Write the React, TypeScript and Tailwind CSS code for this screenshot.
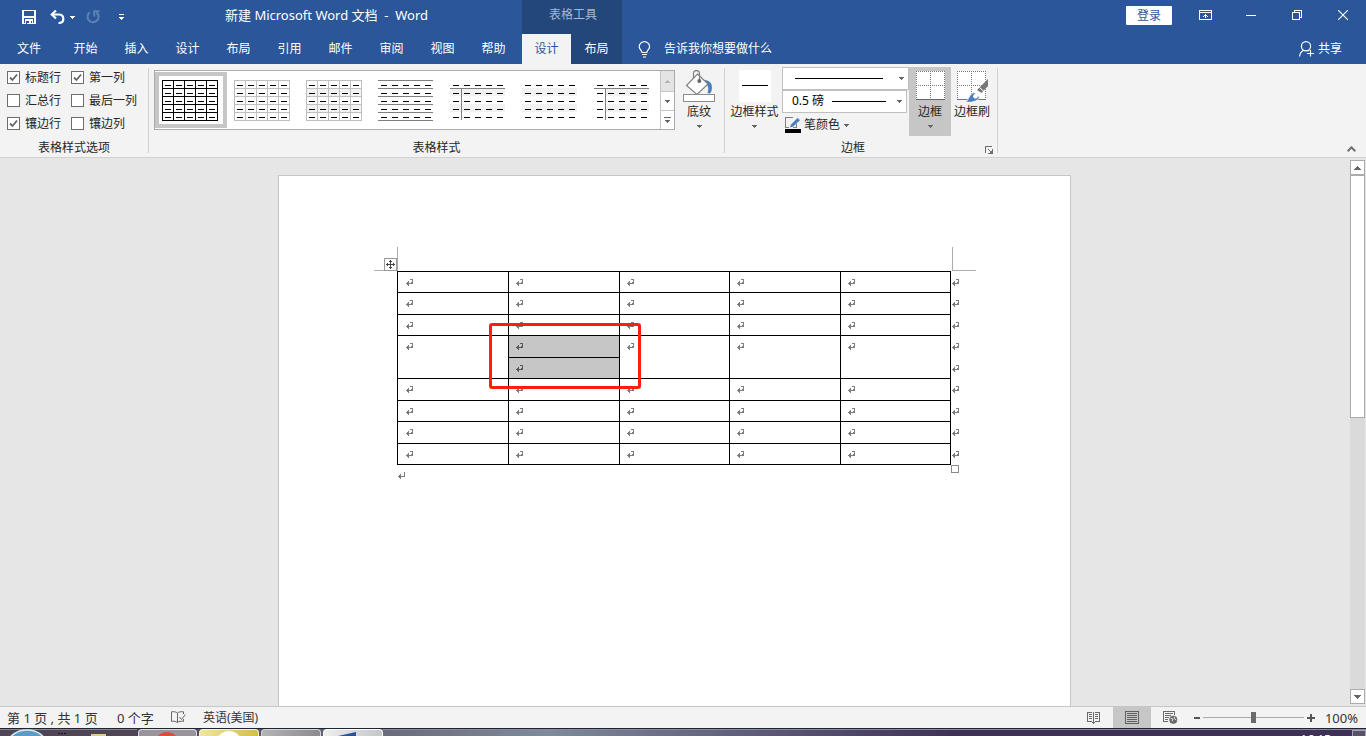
import { Fragment } from 'react';
import type { ReactNode } from 'react';

const MENU_TABS = ['开始', '插入', '设计', '布局', '引用', '邮件', '审阅', '视图', '帮助'];

const STYLE_OPTIONS = [
  { label: '标题行', checked: true },
  { label: '第一列', checked: true },
  { label: '汇总行', checked: false },
  { label: '最后一列', checked: false },
  { label: '镶边行', checked: true },
  { label: '镶边列', checked: false },
];

type ThumbStyle = {
  name: string;
  grid?: string;
  rules?: string;
  header?: boolean;
  bands?: 'all' | 'body';
};

const TABLE_STYLES: ThumbStyle[] = [
  { name: '网格型', grid: '#000000' },
  { name: '网格型浅色', grid: '#bfbfbf' },
  { name: '无格式表格 1', grid: '#bfbfbf', bands: 'all' },
  { name: '无格式表格 2', rules: '#7f7f7f' },
  { name: '无格式表格 3', header: true, bands: 'all' },
  { name: '无格式表格 4', bands: 'all' },
  { name: '无格式表格 5', header: true, bands: 'body' },
];

const FIVE = [0, 1, 2, 3, 4];
const SIX = [0, 1, 2, 3, 4, 5];

function StyleThumb({ style }: { style: ThumbStyle }) {
  const bandX = style.bands === 'body' ? 12 : 0;
  return (
    <svg width="56" height="41" viewBox="0 0 56 41" shapeRendering="crispEdges" aria-hidden="true">
      {style.bands && (
        <g fill="#f2f2f2">
          <rect x={bandX} y="8" width={55 - bandX} height="8" />
          <rect x={bandX} y="24" width={55 - bandX} height="8" />
        </g>
      )}
      {style.grid &&
        SIX.map((i) => (
          <Fragment key={i}>
            <rect x={i * 11} y="0" width="1" height="41" fill={style.grid} />
            <rect x="0" y={i * 8} width="56" height="1" fill={style.grid} />
          </Fragment>
        ))}
      {style.rules &&
        SIX.map((i) => <rect key={i} x="0" y={i * 8} width="55" height="1" fill={style.rules} />)}
      {style.header && (
        <g fill="#7f7f7f">
          <rect x="0" y="8" width="55" height="1" />
          <rect x="11" y="8" width="1" height="32" />
        </g>
      )}
      {FIVE.map((r) =>
        FIVE.map((c) => (
          <rect key={`${r}-${c}`} x={c * 11 + 3} y={r * 8 + 5} width="6" height="1" fill="#000" />
        )),
      )}
    </svg>
  );
}

function Caret({ color = '#666666', up = false }: { color?: string; up?: boolean }) {
  return (
    <svg width="5" height="3" viewBox="0 0 5 3" shapeRendering="crispEdges" aria-hidden="true" className="shrink-0">
      <path d={up ? 'M0 3h5v-1h-1v-1h-1v-1h-1v1h-1v1h-1z' : 'M0 0h5v1h-1v1h-1v1h-1v-1h-1v-1h-1z'} fill={color} />
    </svg>
  );
}

function ReturnMark({ dark = false }: { dark?: boolean }) {
  return (
    <svg width="8" height="8" viewBox="0 0 8 8" shapeRendering="crispEdges" aria-hidden="true" className="block">
      <path
        d="M4 0h3v5h-4v2h-1v-1h-1v-1h-1v-1h1v-1h1v-1h1v2h2v-1h1v-2h-2z"
        fill={dark ? '#5a5a5a' : '#7d7d7d'}
      />
    </svg>
  );
}

function ParagraphMark() {
  return (
    <svg width="8" height="8" viewBox="0 0 8 8" shapeRendering="crispEdges" aria-hidden="true" className="block">
      <path d="M6 0h1v5h-4v2h-1v-1h-1v-1h-1v-1h1v-1h1v-1h1v2h3z" fill="#7d7d7d" />
    </svg>
  );
}

function Separator() {
  return <div className="my-1 w-px shrink-0 bg-[#d2d2d2]" />;
}

function BigButton({
  icon,
  label,
  caret = false,
  active = false,
  wide = false,
}: {
  icon: ReactNode;
  label: string;
  caret?: boolean;
  active?: boolean;
  wide?: boolean;
}) {
  return (
    <button
      type="button"
      className={`mt-[3px] flex h-[69px] shrink-0 flex-col items-center pt-[3px] ${wide ? 'w-[51px]' : 'w-[42px]'} ${active ? 'bg-[#c6c6c6]' : ''}`}
    >
      <span className="flex h-[34px] items-start justify-center">{icon}</span>
      <span className="h-4 leading-4 whitespace-nowrap">{label}</span>
      {caret && (
        <span className="mt-[5px]">
          <Caret />
        </span>
      )}
    </button>
  );
}

function TitleBar() {
  return (
    <header className="flex h-16 shrink-0 bg-[#2b579a] text-white">
      <div className="flex w-[522px] shrink-0 flex-col">
        <div className="flex h-[34px] items-center">
          <button type="button" aria-label="保存" className="ml-[22px]">
            <svg width="14" height="14" viewBox="0 0 14 14" shapeRendering="crispEdges">
              <path
                fill="#fff"
                fillRule="evenodd"
                d="M0 0h14v14h-14zM2 1v5h10v-5zM2 8v5h1v-4h8v4h1v-5zM4 11v3h1v-3zM6 11v2h2v-2z"
              />
              <path fill="#2b579a" d="M4 10h6v3h-6z" />
              <path fill="#fff" d="M4 10h6v1h-6zM7 11h2v2h-2z" />
            </svg>
          </button>
          <button type="button" aria-label="撤消" className="ml-[14px] flex items-center gap-[5px]">
            <svg width="15" height="14" viewBox="0 0 15 14" fill="none" stroke="#fff" strokeWidth="2.2">
              <path d="M6 0.5L1.8 4.5L6 8.5" />
              <path d="M2 4.5H8.5C11.8 4.5 13.3 6.3 13.3 8.7C13.3 11.3 11.5 13 8.5 13" />
            </svg>
            <Caret color="#ffffff" />
          </button>
          <button type="button" aria-label="重复" className="ml-[11px]">
            <svg width="14" height="14" viewBox="0 0 14 14" fill="none" stroke="#5f80b4" strokeWidth="2">
              <path d="M3.8 2.3A5.5 5.5 0 1 0 10.4 2.4" />
              <path d="M8.2 6.5V1.2H13.5" />
            </svg>
          </button>
          <button type="button" aria-label="自定义快速访问工具栏" className="ml-[19px]">
            <svg width="5" height="6" viewBox="0 0 5 6" shapeRendering="crispEdges">
              <path d="M0 0h5v1h-5zM0 3h5v1h-1v1h-1v1h-1v-1h-1v-1h-1z" fill="#fff" />
            </svg>
          </button>
          <h1 className="ml-[101px] pb-1 text-[13px] leading-5 whitespace-pre">新建 Microsoft Word 文档  -  Word</h1>
        </div>
        <nav className="flex h-[30px]">
          <button type="button" className="w-[60px] pr-[2px]">文件</button>
          {MENU_TABS.map((tab) => (
            <button key={tab} type="button" className="w-[51px]">
              {tab}
            </button>
          ))}
        </nav>
      </div>
      <div className="flex w-[100px] shrink-0 flex-col bg-[#24477a]">
        <div className="h-[34px] pt-[5px] pl-[27px] leading-5 text-[#a3b8d6]">表格工具</div>
        <div className="flex h-[30px]">
          <button type="button" className="w-[49px] bg-[#f3f3f3] text-[#2b579a]">设计</button>
          <button type="button" className="w-[51px]">布局</button>
        </div>
      </div>
      <div className="flex min-w-0 flex-1 flex-col">
        <div className="flex h-[34px] justify-end">
          <button type="button" className="mt-[6px] mr-[10px] h-[19px] w-[46px] rounded-[1px] bg-white leading-[19px] text-[#2b579a]">
            登录
          </button>
          <button type="button" aria-label="功能区显示选项" className="flex h-[30px] w-[46px] items-center justify-center">
            <svg width="13" height="10" viewBox="0 0 13 10" fill="none" stroke="#fff" shapeRendering="crispEdges">
              <path d="M0.5 0.5h12v9h-12zM0 2.5h13M6.5 4v4M4 6.5h1M8 6.5h1M5 5.5h3" />
            </svg>
          </button>
          <button type="button" aria-label="最小化" className="flex h-[30px] w-[46px] items-center justify-center">
            <svg width="10" height="1" viewBox="0 0 10 1" shapeRendering="crispEdges">
              <path d="M0 0h10v1h-10z" fill="#fff" />
            </svg>
          </button>
          <button type="button" aria-label="向下还原" className="flex h-[30px] w-[46px] items-center justify-center">
            <svg width="10" height="10" viewBox="0 0 10 10" fill="none" stroke="#fff" shapeRendering="crispEdges">
              <path d="M0.5 2.5h7v7h-7zM2.5 2.5v-2h7v7h-2" />
            </svg>
          </button>
          <button type="button" aria-label="关闭" className="flex h-[30px] w-[46px] items-center justify-center">
            <svg width="10" height="10" viewBox="0 0 10 10" fill="none" stroke="#fff" strokeWidth="1.1">
              <path d="M0 0L10 10M10 0L0 10" />
            </svg>
          </button>
        </div>
        <div className="flex h-[30px] items-center justify-between pr-6 pl-4">
          <button type="button" className="flex items-center gap-[13px]">
            <svg width="13" height="17" viewBox="0 0 13 17" fill="none" stroke="#fff" strokeWidth="1.2">
              <path d="M4 11.5C4 9.5 1.2 8.5 1.2 5.6A5.2 5 0 0 1 11.6 5.6C11.6 8.5 8.8 9.5 8.8 11.5Z" />
              <path d="M4 13.5H9M5 16H8" />
            </svg>
            告诉我你想要做什么
          </button>
          <button type="button" className="flex items-center gap-1">
            <svg width="15" height="16" viewBox="0 0 15 16" fill="none" stroke="#fff" strokeWidth="1.2">
              <circle cx="7" cy="5.2" r="4.6" />
              <path d="M0.6 15.5C0.8 12.5 2.4 10.6 4.6 9.3M9.4 9.2L10.2 9.8" />
              <path d="M11.5 9V15.5M8 12.5H15" />
            </svg>
            共享
          </button>
        </div>
      </div>
    </header>
  );
}

function GroupLabel({ children }: { children: ReactNode }) {
  return <div className="mb-px flex h-4 items-center justify-center leading-4">{children}</div>;
}

function Ribbon() {
  return (
    <section className="flex h-[94px] shrink-0 border-b border-[#d2d2d2] bg-[#f3f3f3] text-[#262626]">
      <div className="flex w-[148px] shrink-0 flex-col justify-between">
        <div className="grid grid-cols-[64px_1fr] pt-[2px] pl-[7px]">
          {STYLE_OPTIONS.map((option) => (
            <label key={option.label} className="flex h-[23px] items-center gap-[5px] whitespace-nowrap">
              <span className="relative flex">
                <input
                  type="checkbox"
                  defaultChecked={option.checked}
                  className="peer size-[13px] appearance-none border border-[#6d6d6d] bg-white"
                />
                <svg
                  width="13"
                  height="13"
                  viewBox="0 0 13 13"
                  fill="none"
                  stroke="#666"
                  strokeWidth="1.8"
                  className="pointer-events-none absolute inset-0 hidden peer-checked:block"
                >
                  <path d="M3 6.5L5.5 9L10 3.5" />
                </svg>
              </span>
              {option.label}
            </label>
          ))}
        </div>
        <GroupLabel>表格样式选项</GroupLabel>
      </div>
      <Separator />
      <div className="flex w-[575px] shrink-0 flex-col justify-between">
        <div className="flex pl-[5px]">
          <div className="mt-[6px] flex h-[60px] border border-[#ababab] bg-white">
            <div className="flex w-[505px] pt-px">
              {TABLE_STYLES.map((style, i) => (
                <button
                  key={style.name}
                  type="button"
                  aria-label={style.name}
                  className={`h-14 w-[72px] border-4 p-[3px] ${i === 0 ? 'border-[#c6c6c6]' : 'border-transparent'}`}
                >
                  <StyleThumb style={style} />
                </button>
              ))}
            </div>
            <div className="flex w-[14px] flex-col border-l border-[#c6c6c6]">
              <button type="button" aria-label="上一行" className="flex h-5 items-center justify-center bg-[#e4e4e4]">
                <Caret up color="#b5b5b5" />
              </button>
              <button type="button" aria-label="下一行" className="flex h-[19px] items-center justify-center border-t border-[#c6c6c6]">
                <Caret />
              </button>
              <button type="button" aria-label="其他" className="flex h-[19px] items-center justify-center border-t border-[#c6c6c6]">
                <svg width="7" height="6" viewBox="0 0 7 6" shapeRendering="crispEdges">
                  <path d="M0 0h7v1h-7zM1 3h5v1h-1v1h-1v1h-1v-1h-1v-1h-1z" fill="#666" />
                </svg>
              </button>
            </div>
          </div>
          <div className="ml-[3px] flex">
            <BigButton
              label="底纹"
              caret
              icon={
                <svg width="32" height="32" viewBox="0 0 32 32" fill="none">
                  <path d="M21 10C28 10 30 15 28.5 21C28 23.5 25.5 24.5 24.5 22.5C26 19 25.5 15.5 22.5 13Z" fill="#4a7ebb" />
                  <path d="M14.5 4L25 14L14 24.5L3.5 15.5Z" fill="#fff" stroke="#808080" strokeWidth="1.2" />
                  <path d="M10.5 8.5V3C10.5 -0.3 16.5 -0.3 16.5 3V10" stroke="#808080" strokeWidth="1.2" />
                  <circle cx="16.3" cy="11" r="2" fill="#666" />
                  <path d="M0.5 24.5H31.5V31.5H0.5Z" fill="#fff" stroke="#8c8c8c" shapeRendering="crispEdges" />
                </svg>
              }
            />
          </div>
        </div>
        <GroupLabel>表格样式</GroupLabel>
      </div>
      <Separator />
      <div className="flex w-[272px] shrink-0 flex-col justify-between">
        <div className="flex pl-1">
          <BigButton
            wide
            label="边框样式"
            caret
            icon={
              <svg width="32" height="32" viewBox="0 0 32 32" shapeRendering="crispEdges">
                <path d="M0 0h32v32h-32z" fill="#fff" />
                <path d="M3 15h26v1h-26z" fill="#000" />
              </svg>
            }
          />
          <div className="mt-[3px] ml-[2px] flex w-[127px] flex-col items-start">
            <div className="relative flex h-[23px] w-full items-center border border-[#c0c0c0] bg-white">
              <select aria-label="笔样式" defaultValue="single" className="absolute inset-0 w-full appearance-none bg-transparent">
                <option value="single" aria-label="单实线" />
              </select>
              <span className="pointer-events-none ml-3 h-px w-[88px] bg-black" />
              <span className="pointer-events-none ml-4 flex">
                <Caret />
              </span>
            </div>
            <div className="relative flex h-[23px] w-[125px] items-center border border-[#c0c0c0] bg-white">
              <select
                aria-label="笔划粗细"
                defaultValue="0.5 磅"
                className="absolute inset-0 w-full appearance-none bg-transparent pb-px pl-[9px] leading-5 text-black"
              >
                <option value="0.5 磅">0.5 磅</option>
              </select>
              <span className="pointer-events-none ml-[49px] h-px w-[54px] bg-black" />
              <span className="pointer-events-none ml-[11px] flex">
                <Caret />
              </span>
            </div>
            <button type="button" className="mt-1 ml-[3px] flex h-4 items-center">
              <svg width="16" height="16" viewBox="0 0 16 16" fill="none">
                <path d="M8 0.5H0.5V10.5H4M11.5 7V10.5H8" stroke="#808080" shapeRendering="crispEdges" />
                <path d="M5 10.5L6 7.5L12.5 1L15 3.2L8.3 9.6Z" fill="#4a7ebb" />
                <path d="M0 12h16v4h-16z" fill="#000" />
              </svg>
              <span className="mr-1 ml-[3px] leading-4">笔颜色</span>
              <Caret />
            </button>
          </div>
          <BigButton
            active
            label="边框"
            caret
            icon={
              <svg width="29" height="30" viewBox="0 0 29 30" shapeRendering="crispEdges" fill="none">
                <path d="M0 1h29v29h-29z" fill="#fff" />
                <path d="M0 1.5H29M0 15.5H29M0.5 1V28M14.5 1V28M28.5 1V28" stroke="#7a7a7a" strokeDasharray="1 1" />
                <path d="M0 29h29v1h-29z" fill="#666" />
              </svg>
            }
          />
          <BigButton
            label="边框刷"
            icon={
              <svg width="32" height="32" viewBox="0 0 32 32" fill="none">
                <path d="M1 1h29v29h-29z" fill="#fff" />
                <path
                  d="M1 1.5H30M1 15.5H30M1.5 1V28M15.5 1V28M29.5 1V28"
                  stroke="#7a7a7a"
                  strokeDasharray="1 1"
                  shapeRendering="crispEdges"
                />
                <path d="M1 29h29v1h-29z" fill="#4a7ebb" shapeRendering="crispEdges" />
                <path d="M9.5 32C13 30 13 24 18 22.5L23.5 27C22 31.5 15 33 9.5 32Z" fill="#4a7ebb" stroke="#fff" strokeWidth="0.8" />
                <circle cx="19.5" cy="26.3" r="2.4" fill="#fff" />
                <path d="M21 20L32 9V16L25.5 23Z" fill="#777" />
                <path d="M23.5 17.5L28 21.5" stroke="#fff" />
              </svg>
            }
          />
        </div>
        <div className="mb-px flex h-4 items-center leading-4">
          <span className="flex-1 text-center">边框</span>
          <button type="button" aria-label="边框对话框启动器" className="mr-1 pl-1">
            <svg width="8" height="8" viewBox="0 0 8 8" fill="none" stroke="#6d6d6d" shapeRendering="crispEdges" className="mt-1">
              <path d="M0.5 7V0.5H7M3 3.5H4M4 4.5H5M7.5 3V8M3 7.5H8M5 5.5H7M5 6.5H7" />
            </svg>
          </button>
        </div>
      </div>
      <Separator />
      <div className="flex flex-1 items-end justify-end pr-[10px] pb-[5px]">
        <button type="button" aria-label="折叠功能区">
          <svg width="9" height="6" viewBox="0 0 9 6" fill="none" stroke="#6d6d6d" strokeWidth="2">
            <path d="M0.7 5.2L4.5 1.4L8.3 5.2" />
          </svg>
        </button>
      </div>
    </section>
  );
}

const ROWS = [
  { split: 0, tall: false },
  { split: 0, tall: true },
  { split: 0, tall: false },
  { split: 1, tall: true },
  { split: 2, tall: false },
  { split: 0, tall: true },
  { split: 0, tall: false },
  { split: 0, tall: true },
  { split: 0, tall: false },
];

function DocumentTable() {
  return (
    <table className="w-[564px] table-fixed border-collapse">
      <colgroup>
        <col className="w-[111px]" />
        <col className="w-[111px]" />
        <col className="w-[110px]" />
        <col className="w-[111px]" />
        <col className="w-[110px]" />
        <col className="w-[10px]" />
      </colgroup>
      <tbody>
        {ROWS.map((row, r) => (
          <tr key={r} className={row.tall ? 'h-[22px]' : 'h-[21px]'}>
            {FIVE.map((c) => {
              if (row.split === 2 && c !== 1) return null;
              const selected = row.split > 0 && c === 1;
              return (
                <td
                  key={c}
                  rowSpan={row.split === 1 && c !== 1 ? 2 : 1}
                  className={`border border-black pt-[7px] align-top ${c === 0 ? 'pl-2' : 'pl-[7px]'} ${selected ? 'bg-[#c6c6c6]' : ''}`}
                >
                  <ReturnMark dark={selected} />
                </td>
              );
            })}
            <td className="pt-[7px] pl-px align-top">
              <ReturnMark />
            </td>
          </tr>
        ))}
      </tbody>
    </table>
  );
}

function Workspace() {
  return (
    <main className="flex min-h-0 flex-1 bg-[#e6e6e6]">
      <div className="min-w-0 flex-1 overflow-hidden pt-[17px]">
        <article className="mx-auto h-[1123px] w-[793px] border border-[#c6c6c6] bg-white px-[95px] pt-[71px]">
          <div className="flex w-[602px] justify-between">
            <div className="flex size-6 items-end justify-end border-r border-b border-[#ababab]">
              <button type="button" aria-label="移动表格" className="-mb-px size-[13px] border border-[#9a9a9a] bg-white">
                <svg width="11" height="11" viewBox="0 0 11 11" shapeRendering="crispEdges" className="block" fill="#444">
                  <path d="M5 1h1v9h-1zM1 5h9v1h-9zM4 2h3v1h-3zM4 8h3v1h-3zM2 4h1v3h-1zM8 4h1v3h-1z" />
                </svg>
              </button>
            </div>
            <div className="size-6 border-b border-l border-[#ababab]" />
          </div>
          <div className="relative ml-[23px] w-[564px]">
            <DocumentTable />
            <div className="pt-[7px] pl-px">
              <ParagraphMark />
            </div>
            <span className="absolute right-[2px] bottom-[7px] size-2 border border-[#8c8c8c] bg-white" />
            <div className="pointer-events-none absolute top-[52px] left-[92px] h-[66px] w-[152px] rounded-[3px] border-3 border-[#ff1e10]" />
          </div>
        </article>
      </div>
      <div className="flex w-[17px] shrink-0 flex-col py-[2px] pr-px pl-px">
        <button type="button" aria-label="向上滚动" className="flex h-[15px] shrink-0 items-center justify-center border border-[#ababab] bg-white">
          <svg width="7" height="4" viewBox="0 0 7 4" shapeRendering="crispEdges">
            <path d="M0 4h7v-1h-1v-1h-1v-1h-1v-1h-1v1h-1v1h-1v1h-1z" fill="#666" />
          </svg>
        </button>
        <div className="min-h-0 flex-1 bg-[#dadada]">
          <div className="h-[47.3%] border border-[#ababab] bg-white" />
        </div>
        <button type="button" aria-label="向下滚动" className="flex h-[15px] shrink-0 items-center justify-center border border-[#ababab] bg-white">
          <svg width="7" height="4" viewBox="0 0 7 4" shapeRendering="crispEdges">
            <path d="M0 0h7v1h-1v1h-1v1h-1v1h-1v-1h-1v-1h-1v-1h-1z" fill="#666" />
          </svg>
        </button>
      </div>
    </main>
  );
}

function StatusBar() {
  return (
    <footer className="flex h-[22px] shrink-0 items-center justify-between border-t border-[#c6c6c6] bg-[#f3f3f3] text-[#333]">
      <div className="flex items-center pl-[7px] leading-5">
        <span className="w-[110px] text-[13px] whitespace-nowrap">第 1 页 , 共 1 页</span>
        <span className="w-[54px] text-[13px] whitespace-nowrap">0 个字</span>
        <button type="button" aria-label="校对">
          <svg width="15" height="13" viewBox="0 0 15 13" fill="none" stroke="#666">
            <path d="M6.5 2V11.5M6.5 2C5 0.7 2.5 0.5 0.5 0.8V10.3C2.5 10 5 10.3 6.5 11.5C7.3 10.8 8 10.4 9 10.2M6.5 2C7.8 0.8 10 0.5 12.5 0.8V3" />
            <path d="M8.5 6L10.5 8.5L14.3 3.5M12.5 8V10.3C11 10.2 9.5 10.2 8.5 10.6" />
          </svg>
        </button>
        <button type="button" className="ml-[17px]">英语(美国)</button>
      </div>
      <div className="flex items-center self-stretch pr-2">
        <button type="button" aria-label="阅读视图" className="mr-[13px]">
          <svg width="13" height="13" viewBox="0 0 13 13" fill="none" stroke="#6a6a6a" shapeRendering="crispEdges">
            <path d="M6.5 1V13M0.5 1V10.5H5M12.5 1V10.5H8M0 1.5H5M8 1.5H13M2 3.5H5M8 3.5H11M2 5.5H5M8 5.5H11M2 7.5H5M8 7.5H11M5 11.5H8" />
          </svg>
        </button>
        <button type="button" aria-label="页面视图" aria-pressed="true" className="flex h-[21px] w-[38px] items-center justify-center bg-[#c6c6c6]">
          <svg width="14" height="13" viewBox="0 0 14 13" fill="none" stroke="#5f5f5f" shapeRendering="crispEdges">
            <path d="M0.5 0.5H13.5V12.5H0.5ZM2 2.5H12M2 4.5H12M2 6.5H12M2 8.5H12M2 10.5H12" />
          </svg>
        </button>
        <button type="button" aria-label="Web 版式视图" className="ml-3">
          <svg width="15" height="13" viewBox="0 0 15 13" fill="none" stroke="#6a6a6a">
            <path d="M5 10.5H0.5V0.5H11.5V4M2 2.5H10M2 4.5H8M2 6.5H6M2 8.5H5" shapeRendering="crispEdges" />
            <circle cx="10.3" cy="8.8" r="4" fill="#6a6a6a" stroke="none" />
            <path d="M7.8 7.2L10 8.2L9 10.2M11.5 5.8L11.3 7.5L13.3 9" stroke="#f3f3f3" strokeWidth="0.9" />
          </svg>
        </button>
        <button type="button" aria-label="缩小" className="ml-[16px]">
          <svg width="6" height="2" viewBox="0 0 6 2" shapeRendering="crispEdges">
            <path d="M0 0h6v2h-6z" fill="#555" />
          </svg>
        </button>
        <input
          type="range"
          aria-label="显示比例"
          min="10"
          max="190"
          defaultValue="100"
          className="mx-[3px] h-[11px] w-[101px] appearance-none bg-transparent [&::-webkit-slider-runnable-track]:h-px [&::-webkit-slider-runnable-track]:bg-[#ababab] [&::-webkit-slider-thumb]:-mt-[5px] [&::-webkit-slider-thumb]:h-[11px] [&::-webkit-slider-thumb]:w-[5px] [&::-webkit-slider-thumb]:appearance-none [&::-webkit-slider-thumb]:bg-[#6a6a6a]"
        />
        <button type="button" aria-label="放大" className="mr-[11px]">
          <svg width="8" height="8" viewBox="0 0 8 8" shapeRendering="crispEdges">
            <path d="M3 0h2v3h3v2h-3v3h-2v-3h-3v-2h3z" fill="#555" />
          </svg>
        </button>
        <button type="button" className="flex w-8 justify-end text-[13px] leading-5">100%</button>
      </div>
    </footer>
  );
}

function Taskbar() {
  return (
    <div className="flex h-2 shrink-0 overflow-hidden border-t border-[#1d2530] bg-linear-to-r from-[#4a3f52] from-10% via-[#7f8a9a] via-40% to-[#3f3156] to-70%">
      <div className="flex h-full w-[137px] shrink-0 items-start bg-[#4f4655]">
        <svg width="137" height="7" viewBox="0 0 137 7">
          <path d="M0 0.5H137" stroke="#8b8592" />
          <ellipse cx="27" cy="15" rx="19" ry="14" fill="#5a9cc4" stroke="#dbe8f2" strokeWidth="1.5" />
          <path d="M58 4.5H66" stroke="#15121a" strokeWidth="1" strokeDasharray="2 1" />
          <path d="M91 7V5H106V7Z" fill="#d9cf94" />
        </svg>
      </div>
      <button type="button" aria-label="浏览器" className="ml-px h-full w-[59px] shrink-0 rounded-t-sm border border-b-0 border-[#e0dde2] bg-[#99939b]">
        <svg width="57" height="6" viewBox="0 0 57 6" className="block">
          <circle cx="28" cy="14" r="12" fill="#dd4b3e" />
        </svg>
      </button>
      <button type="button" aria-label="聊天" className="ml-[2px] h-full w-[60px] shrink-0 rounded-t-sm border border-b-0 border-[#f8f3c8] bg-linear-to-r from-[#efe6a0] to-[#d3bd4a]">
        <svg width="58" height="6" viewBox="0 0 58 6" className="block">
          <circle cx="29" cy="14" r="13" fill="#fff" />
        </svg>
      </button>
      <button type="button" aria-label="文件夹" className="ml-[2px] h-full w-[60px] shrink-0 rounded-t-sm border border-b-0 border-[#d6d6da] bg-linear-to-r from-[#b4b4b4] to-[#8b8b90]" />
      <button type="button" aria-label="Word" className="ml-[2px] h-full w-[60px] shrink-0 rounded-t-sm border border-b-0 border-white bg-linear-to-r from-[#eeeeee] to-[#c4c6ca]">
        <svg width="58" height="6" viewBox="0 0 58 6" className="block">
          <path d="M14 6L32 2V6Z" fill="#2a5298" />
        </svg>
      </button>
      <div className="flex h-full flex-1 items-start justify-end border-t border-[#8a8aa0]">
        <time className="mr-[21px] pt-px text-white">16:15</time>
        <span className="h-full w-[14px] border border-b-0 border-[#a5a3b3] bg-[#57516a]" />
      </div>
    </div>
  );
}

export default function App() {
  return (
    <div className="flex h-screen flex-col overflow-hidden font-['Noto_Sans','Noto_Sans_CJK_SC',sans-serif] text-[12px]">
      <TitleBar />
      <Ribbon />
      <Workspace />
      <StatusBar />
      <Taskbar />
    </div>
  );
}
